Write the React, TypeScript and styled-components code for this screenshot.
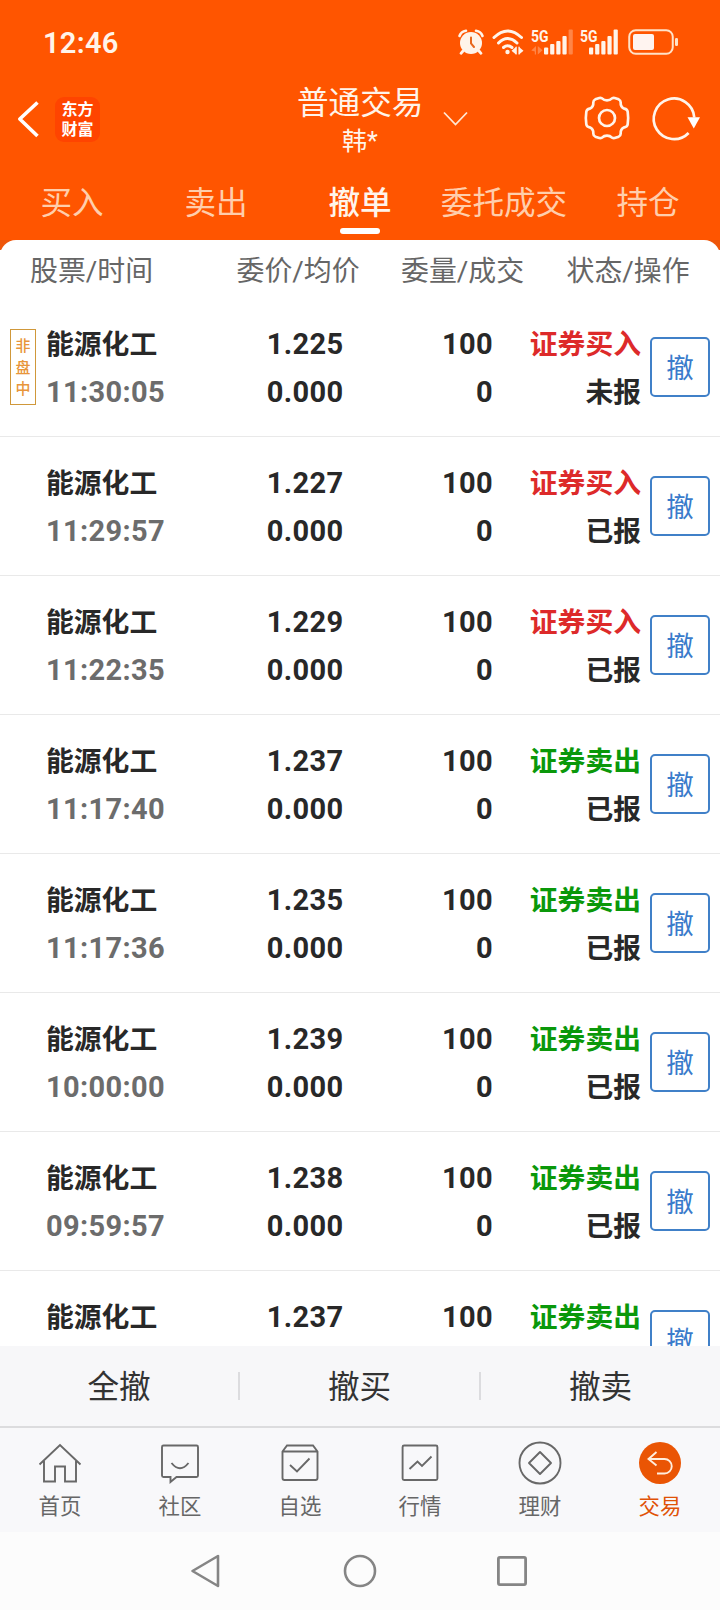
import React from "react";
import styled, { createGlobalStyle } from "styled-components";

const GlobalStyle = createGlobalStyle`
  * { box-sizing: border-box; }
  body {
    margin: 0;
    background: #fcfcfc;
    font-family: Roboto, "Noto Sans CJK SC", sans-serif;
  }
  svg { display: block; flex: none; overflow: visible; }
`;

const CREAM = "#fff4ea";

const Screen = styled.main`
  width: 720px;
  height: 1610px;
  display: flex;
  flex-direction: column;
  overflow: hidden;
`;

const Header = styled.header`
  height: 240px;
  flex: none;
  background: #ff5500;
  color: ${CREAM};
`;

const StatusBar = styled.div`
  height: 84px;
  padding: 0 41px 0 43px;
  display: flex;
  align-items: center;
  justify-content: space-between;
`;

const Clock = styled.span`
  font-size: 29px;
  font-weight: 600;
  letter-spacing: 0.3px;
  padding-top: 2px;
`;

const StatusIcons = styled.div`
  display: flex;
  align-items: center;
`;

const Gap = styled.span<{ $w: number }>`
  width: ${(p) => p.$w}px;
`;

const TitleBar = styled.div`
  height: 84px;
  display: grid;
  grid-template-columns: 297px 126px 1fr;
`;

const TitleLeft = styled.div`
  display: flex;
  padding: 13px 0 0 17px;
  gap: 15px;
`;

const Logo = styled.div`
  width: 45px;
  height: 45px;
  border-radius: 9px;
  background: #ff4400;
  color: #fff;
  font: 700 16px/20px "Noto Sans CJK SC", sans-serif;
  text-align: center;
  padding-top: 1px;
`;

const Titles = styled.div`
  text-align: center;
  white-space: nowrap;
`;

const Title = styled.div`
  font-size: 31.6px;
  line-height: 38px;
  padding-top: 1px;
`;

const Account = styled.div`
  font-size: 25px;
  line-height: 38px;
`;

const TitleRight = styled.div`
  display: flex;
  align-items: flex-start;
  padding: 11px 0 0 20px;
`;

const Tabs = styled.nav`
  height: 72px;
  display: grid;
  grid-template-columns: repeat(5, 1fr);
`;

const Tab = styled.div<{ $active?: boolean }>`
  display: flex;
  flex-direction: column;
  align-items: center;
  font-size: 31.6px;
  line-height: 40px;
  padding-top: 16px;
  white-space: nowrap;
  color: ${(p) => (p.$active ? CREAM : "#ffceac")};
  font-weight: ${(p) => (p.$active ? 500 : 400)};
  &::after {
    content: "";
    width: 40px;
    height: 6px;
    margin-top: 4px;
    border-radius: 3px;
    background: ${(p) => (p.$active ? "#fff" : "transparent")};
  }
`;

const SheetBack = styled.section`
  height: 1106px;
  flex: none;
  overflow: hidden;
  background: linear-gradient(#ee560a 10px, #fff 10px);
`;

const Sheet = styled.div`
  border-radius: 16px 16px 0 0;
  background: #fff;
`;

const Columns = styled.div`
  height: 58px;
  padding: 2px 30px 0;
  display: grid;
  grid-template-columns: 206.5px 164.5px 165.5px 1fr;
  font-size: 27.9px;
  line-height: 59px;
  color: #666;
  white-space: nowrap;
`;

const OrderRow = styled.article`
  height: 139px;
  border-bottom: 1px solid #e9e9e9;
  display: grid;
  grid-template-columns: 46px 154px 143.5px 149.5px 148px 1fr;
  color: #282828;
  font-size: 29px;
  font-weight: 700;
  line-height: 48px;
  white-space: nowrap;
  letter-spacing: 0.35px;
`;

const Cell = styled.div<{ $end?: boolean }>`
  padding-top: 22px;
  text-align: ${(p) => (p.$end ? "right" : "left")};
`;

const Line = styled.div<{ $color?: string; $cjk?: boolean }>`
  height: 48px;
  ${(p) => p.$color && `color: ${p.$color};`}
  ${(p) => p.$cjk && "font-size: 27.8px; letter-spacing: 0; line-height: 50px;"}
`;

const Session = styled.div`
  width: 26px;
  height: 76px;
  margin: 31px 0 0 10px;
  padding-top: 6px;
  border: 1px solid #d0983a;
  color: #e8953a;
  font-size: 15px;
  font-weight: 500;
  line-height: 21.5px;
  letter-spacing: 0;
  text-align: center;
  white-space: normal;
`;

const CancelButton = styled.button`
  width: 60px;
  height: 60px;
  margin: 39px 0 0 9px;
  padding: 0;
  border: 2px solid #4080c8;
  border-radius: 5px;
  background: #fff;
  color: #3a7bcb;
  font: 400 27.5px/54px "Noto Sans CJK SC", sans-serif;
  display: flex;
  justify-content: center;
`;

const Actions = styled.div`
  height: 80px;
  flex: none;
  background: #f7f7f9;
  display: grid;
  grid-template-columns: 238px 2px 239px 2px 239px;
  align-items: center;
  text-align: center;
  font-size: 31.6px;
  color: #333;
`;

const Action = styled.span`
  padding-bottom: 4px;
`;

const Divider = styled.span`
  height: 28px;
  background: #dcdcdf;
`;

const BottomNav = styled.nav`
  height: 106px;
  flex: none;
  background: #f8f8fa;
  border-top: 2px solid #dcdcde;
  display: grid;
  grid-template-columns: repeat(6, 1fr);
`;

const NavItem = styled.div<{ $active?: boolean }>`
  display: flex;
  flex-direction: column;
  align-items: center;
  padding-top: 13px;
  font-size: 21.4px;
  line-height: 30px;
  gap: 7px;
  color: ${(p) => (p.$active ? "#e05206" : "#666")};
`;

const SystemBar = styled.div`
  height: 78px;
  flex: none;
  padding-left: 189px;
  background: #fcfcfc;
  display: flex;
  align-items: center;
`;

const AlarmIcon = () => (
  <svg width="26" height="26" viewBox="0 0 26 26" fill="none" stroke={CREAM} strokeLinecap="round">
    <circle cx="13" cy="14" r="11" fill={CREAM} stroke="none" />
    <path d="M1.5 7Q3 2.5 8 1.8M24.5 7Q23 2.5 18 1.8" strokeWidth="2.6" />
    <path d="M5 22L3 24.3M21 22L23 24.3" strokeWidth="2.8" />
    <path d="M13 8.5V14.5L16 18" stroke="#e8681f" strokeWidth="2" />
  </svg>
);

const WifiIcon = () => (
  <svg width="32" height="26" viewBox="0 0 32 26" fill="none" stroke={CREAM} strokeWidth="3" strokeLinecap="round">
    <path d="M2 8.5Q15.5 -4.5 29.5 8.5M6.5 14Q15.5 5 25 14M11.5 18.5Q15.5 15 20 18.5" />
    <circle cx="15.5" cy="23" r="2.2" fill={CREAM} stroke="none" />
    <path d="M24 18V25.5L19.5 21.8ZM27 18V25.5L31.5 21.8Z" fill={CREAM} stroke="none" />
    <path d="M24.2 18V25M27 18V25" strokeWidth="1.2" />
  </svg>
);

const SignalIcon = ({ weak }: { weak?: boolean }) => {
  const start = weak ? 13 : 9;
  const width = weak ? 43 : 39;
  return (
    <svg width={width} height="26" viewBox={`0 0 ${width} 26`} fill={CREAM}>
      <text x="0" y="12.6" fontSize="16.5" fontWeight="700" textLength="17.5" lengthAdjust="spacingAndGlyphs">
        5G
      </text>
      {[7, 10.5, 13.5, 18.5, 25].map((h, i) => (
        <rect key={h} x={start + i * 6.15} y={25.5 - h} width="4.2" height={h} rx="1" opacity={weak && i === 4 ? 0.3 : 1} />
      ))}
      {weak && <path d="M5 17V25.5H3.8V22.5L.3 21.5ZM6.8 17V25.5L11.5 21.3Z" opacity="0.3" />}
    </svg>
  );
};

const BatteryIcon = () => (
  <svg width="51" height="26" viewBox="0 0 51 26" fill="none">
    <rect x="1.25" y="1.25" width="43.5" height="23.5" rx="6.5" stroke="#ffe2c8" strokeWidth="2" />
    <rect x="5" y="5" width="21" height="16" rx="2" fill="#fff4f0" />
    <rect x="47" y="9" width="3" height="8" rx="1.2" fill="#ffe2c8" />
  </svg>
);

const BackIcon = () => (
  <svg width="23" height="44" viewBox="0 0 23 44" fill="none" stroke="#fff" strokeWidth="3.6">
    <path d="M20.5 5.5L2.8 22L20.5 39" strokeLinejoin="round" />
  </svg>
);

const ChevronIcon = () => (
  <svg width="26" height="46" viewBox="0 0 26 46" fill="none" stroke="#ffe8d4" strokeWidth="1.8">
    <path d="M1 17.5L12.5 29.5L24 17.5" />
  </svg>
);

const GearIcon = () => (
  <svg width="46" height="46" viewBox="0 0 138 138" fill="none" stroke={CREAM} strokeWidth="8">
    <path d="M69 16Q78 16 84 10Q88 8 92 9L104 13Q110 16 110 22Q109 36 121 41Q130 43 131 50Q134 69 131 88Q130 95 121 97Q109 102 110 116Q110 122 104 125L92 129Q88 130 84 128Q78 122 69 122Q60 122 54 128Q50 130 46 129L34 125Q28 122 28 116Q29 102 17 97Q8 95 7 88Q4 69 7 50Q8 43 17 41Q29 36 28 22Q28 16 34 13L46 9Q50 8 54 10Q60 16 69 16Z" />
    <circle cx="69" cy="69" r="24" />
  </svg>
);

const RefreshIcon = () => (
  <svg width="54" height="46" viewBox="0 0 54 46" fill="none">
    <path d="M44.3 22.5A20.3 20.3 0 1 0 38.6 38" stroke={CREAM} strokeWidth="2.7" />
    <path d="M37.5 22.3H50L43.8 33.5Z" fill="#fff" />
  </svg>
);

const navIcons: Record<string, React.ReactNode> = {
  首页: <path d="M1.5 23.5L22 4L42.5 23.5M6 20V40.5H17V25.5H27V40.5H38V20" />,
  社区: (
    <path d="M5.5 4.5H38.500Q40 4.5 40 6V34.5Q40 36 38.5 36H18.5L12.5 41V36H5.5Q4 36 4 34.5V6Q4 4.5 5.5 4.5ZM13.5 22Q22 32.5 30.5 22" />
  ),
  自选: (
    <path d="M4.5 10.5L9 4.5H35L39.5 10.5V37Q39.5 39 37.5 39H6.5Q4.5 39 4.5 37ZM4.5 10.5H39.5M12 24L19 30.5L31.5 17.5" />
  ),
  行情: (
    <>
      <rect x="4.6" y="4.5" width="34.8" height="34.5" rx="1.5" />
      <path d="M11.5 28L19.5 20.5L24 25L33.5 15.5" />
    </>
  ),
  理财: (
    <>
      <circle cx="22" cy="22" r="20.5" />
      <path d="M22 11L33 22L22 33L11 22Z" strokeLinejoin="round" />
    </>
  ),
  交易: (
    <>
      <circle cx="22" cy="22" r="21" fill="#ea5504" stroke="none" />
      <path d="M18.5 11L10.5 18L18.5 24.5M10.5 18H26.5A7 7 0 0 1 26.5 32.5H19" stroke="#ffeedd" />
    </>
  ),
};

type OrderData = { time: string; price: string; sell?: boolean; status: string; offSession?: boolean };

const orders: OrderData[] = [
  { time: "11:30:05", price: "1.225", status: "未报", offSession: true },
  { time: "11:29:57", price: "1.227", status: "已报" },
  { time: "11:22:35", price: "1.229", status: "已报" },
  { time: "11:17:40", price: "1.237", status: "已报", sell: true },
  { time: "11:17:36", price: "1.235", status: "已报", sell: true },
  { time: "10:00:00", price: "1.239", status: "已报", sell: true },
  { time: "09:59:57", price: "1.238", status: "已报", sell: true },
];

const Order = ({ order, partial }: { order: OrderData; partial?: boolean }) => (
  <OrderRow>
    <div>{order.offSession && <Session>非<br />盘<br />中</Session>}</div>
    <Cell>
      <Line $cjk>能源化工</Line>
      {!partial && <Line $color="#6c6c6c">{order.time}</Line>}
    </Cell>
    <Cell $end>
      <Line>{order.price}</Line>
      {!partial && <Line>0.000</Line>}
    </Cell>
    <Cell $end>
      <Line>100</Line>
      {!partial && <Line>0</Line>}
    </Cell>
    <Cell $end>
      <Line $cjk $color={order.sell ? "#0a980a" : "#dd2a2a"}>{order.sell ? "证券卖出" : "证券买入"}</Line>
      {!partial && <Line $cjk>{order.status}</Line>}
    </Cell>
    <CancelButton>撤</CancelButton>
  </OrderRow>
);

export default function App() {
  return (
    <Screen>
      <GlobalStyle />
      <Header>
        <StatusBar>
          <Clock>12:46</Clock>
          <StatusIcons>
            <AlarmIcon />
            <Gap $w={8} />
            <WifiIcon />
            <Gap $w={7} />
            <SignalIcon weak />
            <Gap $w={6} />
            <SignalIcon />
            <Gap $w={9} />
            <BatteryIcon />
          </StatusIcons>
        </StatusBar>
        <TitleBar>
          <TitleLeft>
            <BackIcon />
            <Logo>东方<br />财富</Logo>
          </TitleLeft>
          <Titles>
            <Title>普通交易</Title>
            <Account>韩*</Account>
          </Titles>
          <TitleRight>
            <ChevronIcon />
            <Gap $w={115} />
            <GearIcon />
            <Gap $w={19.5} />
            <RefreshIcon />
          </TitleRight>
        </TitleBar>
        <Tabs>
          {["买入", "卖出", "撤单", "委托成交", "持仓"].map((t) => (
            <Tab key={t} $active={t === "撤单"}>{t}</Tab>
          ))}
        </Tabs>
      </Header>
      <SheetBack>
        <Sheet>
          <Columns>
            <span>股票/时间</span>
            <span>委价/均价</span>
            <span>委量/成交</span>
            <span>状态/操作</span>
          </Columns>
          {orders.map((o) => (
            <Order key={o.time} order={o} />
          ))}
          <Order order={{ time: "", price: "1.237", status: "", sell: true }} partial />
        </Sheet>
      </SheetBack>
      <Actions>
        <Action>全撤</Action>
        <Divider />
        <Action>撤买</Action>
        <Divider />
        <Action>撤卖</Action>
      </Actions>
      <BottomNav>
        {Object.entries(navIcons).map(([label, icon]) => (
          <NavItem key={label} $active={label === "交易"}>
            <svg width="44" height="44" viewBox="0 0 44 44" fill="none" stroke="#686868" strokeWidth="1.9">
              {icon}
            </svg>
            {label}
          </NavItem>
        ))}
      </BottomNav>
      <SystemBar>
        <svg width="32" height="36" viewBox="0 0 32 36" fill="none" stroke="#858585" strokeWidth="2.6" strokeLinejoin="round">
          <path d="M29 3V33L3.5 18Z" />
        </svg>
        <Gap $w={122} />
        <svg width="34" height="34" viewBox="0 0 34 34" fill="none" stroke="#858585" strokeWidth="2.6">
          <circle cx="17" cy="17" r="15" />
        </svg>
        <Gap $w={119} />
        <svg width="32" height="32" viewBox="0 0 32 32" fill="none" stroke="#858585" strokeWidth="2.8">
          <rect x="2.4" y="2.4" width="27.2" height="27.2" rx="1.5" />
        </svg>
      </SystemBar>
    </Screen>
  );
}
